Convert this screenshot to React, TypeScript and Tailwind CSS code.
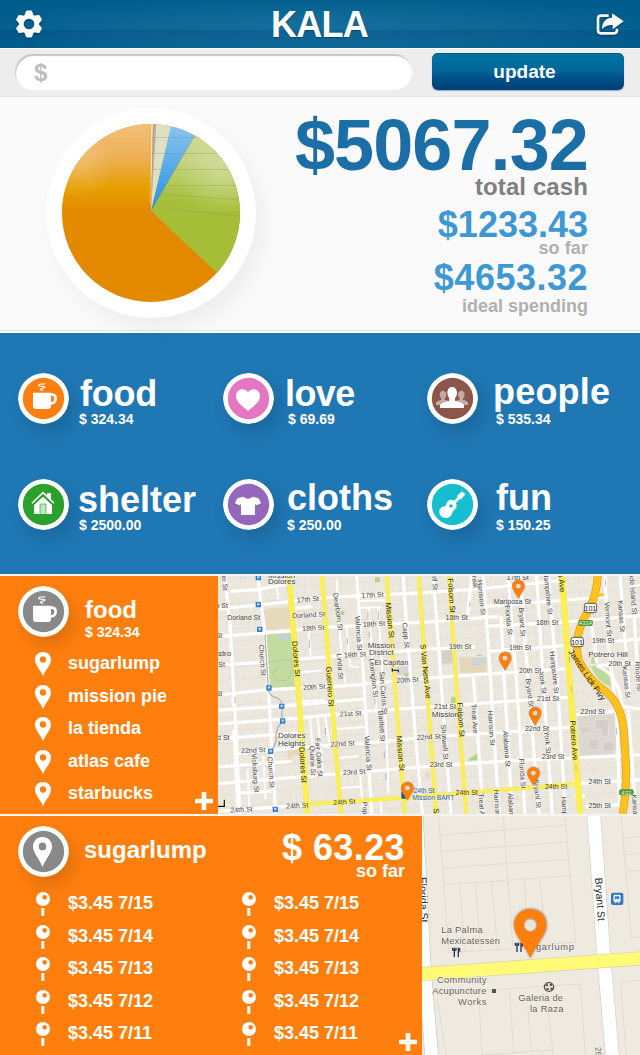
import type { ReactNode } from "react";

type P = { className?: string };

/* ---------- icons ---------- */

const GearIcon = () => (
  <svg viewBox="0 0 28 28" className="h-7 w-7 drop-shadow-[0_1px_1px_rgba(0,0,0,0.3)]">
    <circle cx="14" cy="14" r="7.6" strokeWidth="4.6" stroke="#fafafa" fill="none" />
    {[0, 60, 120, 180, 240, 300].map((a) => (
      <path key={a} d="M9.2 6L10.8 1.4Q11.1 0.5 12 0.5H16Q16.9 0.5 17.2 1.4L18.8 6L16 7.5H12Z" fill="#fafafa" transform={`rotate(${a} 14 14)`} />
    ))}
  </svg>
);

const ShareIcon = () => (
  <svg viewBox="0 0 84 69" className="h-[23px] w-7 drop-shadow-[0_1px_1px_rgba(0,0,0,0.3)]">
    <path d="M38 8H15Q6 8 6 17V52Q6 61 15 61H54Q63 61 63 52V47" fill="none" stroke="#f4f4f4" strokeWidth="8" />
    <path d="M48 1L83 25L50 49V36C38 35 28 38 18 48C18 29 28 15 48 14Z" fill="#fafafa" />
  </svg>
);

const CupIcon = () => (
  <>
    <path d="M45 59H99V99Q99 108 90 108H54Q45 108 45 99Z" fill="#fff" />
    <path d="M97 65H102Q114 66 113 78Q112 91 98 91" fill="none" stroke="#fff" strokeWidth="8" />
    <path d="M82 31C76 36 66 30 62 36C60 42 76 38 80 41C83 46 68 44 67 49Q68 52 76 51" fill="none" stroke="#fff" strokeWidth="3.5" />
  </>
);

const HeartIcon = () => (
  <path d="M75 114C64 103 39 89 39 69C39 46 66 43 75 58C84 43 111 46 111 69C111 89 86 103 75 114Z" fill="#fff" />
);

const PeopleIcon = () => (
  <g fill="#fff">
    <g opacity="0.5">
      <path d="M38 64C38 50 58 50 58 64Q58 73 53 76V80L66 85L50 96H27V90Q28 84 43 80V76Q38 72 38 64Z" />
      <path d="M93 64C93 50 113 50 113 64Q113 73 108 76V80Q123 84 123 90V96H100L84 85L98 80V76Q93 72 93 64Z" />
    </g>
    <path d="M61 59C61 36 90 36 90 59Q90 71 84 76V83Q111 89 111 98V105H39V98Q40 89 67 83V76Q61 71 61 59Z" />
  </g>
);

const HouseIcon = () => (
  <>
    <path d="M48 78L75 53L102 78V105H48Z" fill="#fff" />
    <path d="M42 73L75 41L108 73" fill="none" stroke="#fff" strokeWidth="4.5" />
    <path d="M87 42H99V63L87 52Z" fill="#fff" />
    <path d="M66 105V75H84V105" fill="#c5e6c5" stroke="#2ca02c" strokeWidth="2" />
  </>
);

const ShirtIcon = () => (
  <path d="M61 53Q75 65 89 53L105 57Q113 63 114 73L100 79L96 75V108H54V75L50 79L36 73Q37 63 45 57Z" fill="#fff" />
);

const GuitarIcon = () => (
  <>
    <path d="M58 74C63 58 84 58 88 76C92 90 78 92 76 101C72 121 47 121 39 107C32 91 44 81 54 83Z" fill="#fff" />
    <path d="M76 77L96 56" stroke="#fff" strokeWidth="9" />
    <path d="M91 51L105 38L114 46L101 61Z" fill="#fff" stroke="#fff" strokeWidth="2" strokeLinejoin="round" />
    <circle cx="72" cy="81" r="5.5" fill="#17becf" />
  </>
);

const PinShape = ({ fill, hole }: { fill: string; hole?: string }) => (
  <>
    <path d="M24 0C38 0 48 10 48 23C48 38 33 51 24 72C15 51 0 38 0 23C0 10 10 0 24 0ZM24 13A9.5 9.5 0 1 0 24 32A9.5 9.5 0 1 0 24 13Z" fill={fill} fillRule="evenodd" />
    {hole && <circle cx="24" cy="22.5" r="9.5" fill={hole} />}
  </>
);

const CirclePinIcon = () => (
  <g transform="translate(45 33) scale(1.19 1.25)">
    <PinShape fill="#fff" />
  </g>
);

const PinIcon = () => (
  <svg viewBox="0 0 48 72" className="h-6 w-4 shrink-0">
    <PinShape fill="#fff" />
  </svg>
);

const TackIcon = () => (
  <svg viewBox="0 0 42 72" className="h-6 w-3.5 shrink-0">
    <path d="M21 0A21 21 0 1 0 21 42A21 21 0 1 0 21 0ZM26 9A7 7 0 1 1 26 23A7 7 0 1 1 26 9Z" fill="#fff" fillRule="evenodd" />
    <rect x="16" y="48" width="9" height="24" fill="#fff" />
  </svg>
);

const PlusIcon = ({ className = "" }: P) => (
  <svg viewBox="0 0 18 18" className={`h-[18px] w-[18px] shrink-0 ${className}`}>
    <path d="M9 0V18M0 9H18" stroke="#fff" strokeWidth="4.6" />
  </svg>
);

const Disc = ({ color, children }: { color: string; children: ReactNode }) => (
  <svg viewBox="0 0 153 153" className="h-[51px] w-[51px] shrink-0 rounded-full shadow-[6px_9px_18px_rgba(0,0,0,0.13)]">
    <circle cx="76.5" cy="76.5" r="76.5" fill="#fff" />
    <circle cx="76.5" cy="76.5" r="62" fill={color} />
    {children}
  </svg>
);

/* ---------- summary pie ---------- */

const Pie = () => (
  <svg viewBox="0 0 178 178" className="h-[178px] w-[178px]">
    <defs>
      <clipPath id="pie">
        <circle cx="89" cy="89" r="89" />
      </clipPath>
      <linearGradient id="orangeTop" x1="0" y1="0" x2="0" y2="1">
        <stop offset="0" stopColor="#f2c078" />
        <stop offset="0.35" stopColor="#eeb25a" />
        <stop offset="0.6" stopColor="#e9a420" />
        <stop offset="0.72" stopColor="#e7a000" />
        <stop offset="1" stopColor="#e38900" />
      </linearGradient>
      <linearGradient id="greenTop" x1="0.3" y1="0" x2="0.15" y2="1">
        <stop offset="0" stopColor="#d3dd9c" />
        <stop offset="0.4" stopColor="#c5d381" />
        <stop offset="0.85" stopColor="#a9c03e" />
        <stop offset="1" stopColor="#a6bd38" />
      </linearGradient>
      <linearGradient id="blueTop" x1="0" y1="0" x2="0" y2="1">
        <stop offset="0" stopColor="#8cc5ef" />
        <stop offset="1" stopColor="#2291e2" />
      </linearGradient>
      <radialGradient id="gloss" cx="0.2" cy="0.45" r="0.4">
        <stop offset="0" stopColor="#fff" stopOpacity="0.18" />
        <stop offset="1" stopColor="#fff" stopOpacity="0" />
      </radialGradient>
      <radialGradient id="glossRight" cx="0.75" cy="0.6" r="0.45">
        <stop offset="0" stopColor="#fff" stopOpacity="0.2" />
        <stop offset="1" stopColor="#fff" stopOpacity="0" />
      </radialGradient>
    </defs>
    <g clipPath="url(#pie)">
      <rect width="178" height="178" fill="#e38900" />
      <rect width="89" height="88" fill="url(#orangeTop)" />
      <rect width="89" height="88" fill="url(#gloss)" />
      <path d="M89 87L134 10L180 10V178H185L154 148Z" fill="#a6bd38" />
      <path d="M89 87L140 0H180V87Z" fill="url(#greenTop)" />
      <path d="M89 87L140 0H180V87Z" fill="url(#glossRight)" />
      <path d="M89 87L109 0H139.5Z" fill="url(#blueTop)" />
      <path d="M89 87L93 0H109.5Z" fill="#dfdfc1" />
      <path d="M89 87L89 0H91Z" fill="#eee6bc" />
      <path d="M89 87L91 0H92.5Z" fill="#df8f78" />
      <path d="M89 87L92.6 0H94.5Z" fill="#9dbccb" />
      <path d="M88.4 0V80" stroke="#efb94f" strokeWidth="1" />
      <path d="M91 13.5H140M91 29.5H155M91 45.5H166M106 61.5H174M100 70L178 76M108 85L178 92" stroke="#7e9070" strokeOpacity="0.3" strokeWidth="1" fill="none" />
      <path d="M6 123L19 118" stroke="#b98a10" strokeOpacity="0.6" />
    </g>
  </svg>
);

/* ---------- neighbourhood map ---------- */

type Label = [x: number, y: number, text: string, angle?: number, size?: number];

const minorRoads = [
  "M9 108L130 96L330 74L640 58L800 47L1040 22",
  "M45 55L125 50L215 34",
  "M240 106L292 100M240 130L322 122",
  "M810 100L1130 75",
  "M9 190L150 180L330 163L640 147L850 130",
  "M815 160L1050 147L1275 128",
  "M9 276L150 268M250 258L450 243L640 228L780 222M820 235L1050 217M1140 210L1275 198",
  "M9 366L160 350L400 338L640 315L860 300L1060 287M1150 278L1275 268",
  "M9 412L250 395L450 378",
  "M9 453L250 435L450 415L640 402L860 386L1062 372",
  "M9 497L250 480",
  "M60 543L250 524L450 510L640 492L860 478L1072 462M1080 426L1210 413",
  "M9 632L250 612L420 598L640 580L860 565L1275 545",
  "M9 582L230 565M75 660L170 655M9 715L280 695M1090 632L1275 620",
  "M1110 702L1220 694M1080 668L1110 668",
  "M30 9L45 160L60 420L75 723",
  "M128 9L150 180L160 345L172 560L182 723",
  "M425 9L445 300L470 723",
  "M565 9L575 160L600 470L622 723",
  "M655 9L680 350L708 723",
  "M770 9L758 125M775 310L805 723",
  "M805 9L822 250L852 723",
  "M858 130L868 330L892 723",
  "M880 20L905 330L930 723",
  "M915 9L940 330L972 723",
  "M965 9L985 330L1012 723",
  "M1000 9L1027 330L1052 723",
  "M1170 9L1178 190L1205 420L1215 723",
  "M1215 9L1235 260L1243 370M1250 9L1270 330",
  "M1130 75L1180 70M1128 140L1145 270M1240 410L1262 723",
  "M1145 278Q1210 300 1222 400L1275 408",
];

const lanes = [
  "M185 40L190 78M280 170L287 250M365 20L370 100L380 260M395 165L405 280L430 282",
  "M460 100L485 420M490 100L515 500L520 660M430 85L510 82M430 105L500 102",
  "M285 435L300 610M308 432L325 610M330 430L345 520",
  "M245 300L320 292M260 385L330 380M365 468L448 462M370 555L430 550M378 645L440 640",
  "M98 590L104 720M122 545L130 650M145 548L152 680M50 375L55 400M55 470L68 723",
  "M385 300L395 340M435 600L445 720M495 680L500 723",
  "M1000 590L1010 640M1140 205L1145 250M1250 40L1275 36",
];

const yellowRoads: [string, number][] = [
  ["M222 9L250 350L277 723", 15],
  ["M321 9L348 350L378 723", 12],
  ["M515 9L541 350L570 723", 10],
  ["M611 9L636 350L664 723", 10],
  ["M702 9L725 350L754 723", 10],
  ["M1041 9L1066 350L1096 723", 17],
  ["M280 694L560 675L1090 632", 10],
];

const mapLabels: Label[] = [
  [200, 34, "Dolores", 0, 24],
  [200, 14, "Mission", 0, 24],
  [279, 86, "17th St", -4],
  [86, 141, "Dorland St"],
  [281, 133, "Dorland St", -3],
  [295, 172, "18th St", -3],
  [473, 73, "17th St", -3],
  [477, 160, "18th St", -3],
  [420, 252, "19th St", -3],
  [298, 349, "20th St", -3],
  [578, 328, "20th St", -3],
  [407, 429, "21st St", -3],
  [383, 519, "22nd St", -3],
  [115, 539, "22nd St", -3],
  [418, 604, "23rd St", -3],
  [388, 694, "24th St", -3],
  [247, 705, "24th St", -3],
  [80, 717, "24th St", -3],
  [22, 248, "astro", 0, 24],
  [20, 105, "h St"], [20, 283, "St"], [25, 502, "d St"], [12, 194, "St"], [12, 368, "St"],
  [499, 224, "Mission", 0, 24],
  [499, 247, "District", 0, 24],
  [529, 275, "El Capitan", 0, 22],
  [230, 496, "Dolores", 0, 24],
  [230, 519, "Heights", 0, 24],
  [642, 499, "22nd St", -3],
  [627, 660, "24th St", 0, 20],
  [655, 682, "Mission BART", 0, 20],
  [22, 30, "er St", 86],
  [135, 262, "Church St", 86],
  [161, 598, "Church St", 86],
  [114, 600, "Vicksburg St", 86],
  [236, 258, "Dolores St", 85, 23],
  [256, 576, "Dolores St", 86, 23],
  [337, 341, "Guerrero St", 86, 23],
  [362, 117, "Dearborn St", 82],
  [368, 280, "Linda St", 86],
  [424, 181, "Valencia St", 86],
  [452, 541, "Valencia St", 86],
  [469, 315, "Lexington St", 84],
  [498, 360, "San Carlos St", 86],
  [493, 460, "Bartlett St", 86],
  [517, 143, "Mission St", 84, 23],
  [549, 542, "Mission St", 85, 23],
  [566, 188, "Capp St", 84],
  [624, 296, "S Van Ness Ave", 84, 23],
  [305, 554, "Fair Oaks St", 86],
  [286, 563, "Quane St", 88],
  [443, 708, "Popl", 86],
  [892, 92, "Mariposa St"],
  [908, 22, "17th St"],
  [725, 140, "18th St"],
  [996, 155, "18th St"],
  [735, 228, "19th St"],
  [915, 230, "19th St"],
  [1164, 211, "19th St"],
  [945, 299, "20th St"],
  [1214, 278, "20th St"],
  [999, 384, "21st St"],
  [690, 407, "21st St"],
  [691, 432, "Mission", 0, 24],
  [1133, 424, "22nd St"],
  [966, 474, "22nd St"],
  [1014, 558, "23rd St"],
  [678, 583, "23rd St"],
  [1023, 647, "24th St"],
  [755, 667, "24th St"],
  [1154, 634, "24th St"],
  [1154, 704, "25th St"],
  [1179, 252, "Potrero Hill", 0, 24],
  [652, 28, "ell St", 86],
  [702, 68, "Folsom St", 86, 23],
  [730, 441, "Folsom St", 86, 23],
  [772, 22, "Treat", 80],
  [792, 74, "Harrison St", 84],
  [772, 438, "Treat Ave", 86],
  [682, 508, "Shotwell St", 86],
  [822, 466, "Harrison St", 86],
  [868, 528, "Alabama St", 86],
  [874, 142, "Florida St", 84],
  [914, 147, "Bryant St", 86],
  [992, 62, "Hampshire St", 84],
  [937, 360, "Bryant St", 84],
  [976, 330, "York St", 82],
  [1011, 299, "Hampshire St", 84],
  [990, 509, "York St", 85],
  [1069, 503, "Potrero Ave", 86, 23],
  [1032, 30, "o Ave", 84, 23],
  [915, 602, "Florida St", 86],
  [960, 663, "Bryant St", 84],
  [1172, 139, "Vermont St", 86],
  [1212, 130, "Kansas St", 86],
  [1247, 63, "ode Island St", 86],
  [1227, 328, "Kansas St", 84],
  [1263, 310, "Rhode Isl", 86],
  [1253, 700, "Kansas", 86],
  [839, 690, "Harrison", 86],
  [881, 696, "Alabam", 86],
  [793, 700, "Treat Av", 86],
  [1041, 700, "Hamp", 86],
  [656, 714, "S", 86, 23],
  [1109, 311, "James Lick Fwy", 56, 25],
];

const transit: [number, number][] = [
  [130, 14], [130, 95], [134, 169], [162, 345], [200, 400], [203, 444], [167, 535], [181, 709],
];

const mapPins: [number, number][] = [
  [910, 77], [870, 293], [960, 458], [955, 638], [577, 683],
];

const NeighbourhoodMap = () => (
  <svg viewBox="9 9 1266 714" preserveAspectRatio="none" className="h-[238px] w-[422px] shrink-0 font-normal">
    <defs>
      <pattern id="lots" width="44" height="38" patternUnits="userSpaceOnUse" patternTransform="rotate(-4)">
        <path d="M0 0V38M22 0V19M0 19H44M33 19V38" stroke="#dfdace" strokeWidth="1.6" fill="none" />
      </pattern>
      <filter id="pinShadow" x="-50%" y="-30%" width="200%" height="170%">
        <feDropShadow dx="1" dy="-1" stdDeviation="2.5" floodColor="#333" floodOpacity="0.8" />
      </filter>
    </defs>
    <rect x="0" y="0" width="1290" height="740" fill="#ece8de" />
    <rect x="0" y="0" width="1290" height="740" fill="url(#lots)" />

    <path d="M139 108L226 102L230 166L143 172Z" fill="#e5dabb" />
    <path d="M146 184L232 180L239 342L162 348Z" fill="#c3dba0" />
    <path d="M185 184L225 182L227 200L190 200Z" fill="#bfd3d3" />
    <path d="M160 268L225 258Q245 290 215 322Q180 330 172 300Q175 290 190 285" fill="none" stroke="#adc98e" strokeWidth="2.5" />
    <path d="M680 233L718 230L722 270L682 273Z" fill="#d3cfcb" />
    <path d="M733 252L815 252L815 298L735 300Z" fill="#e4d7ba" />
    <path d="M770 256L812 254L813 275L772 277Z" fill="#c6d7d6" />
    <path d="M708 372L726 370V390L708 392ZM376 115L388 113V125L376 127ZM480 13H494V28H480ZM755 563L788 540V562Z" fill="#b2d58e" />
    <path d="M218 530L258 526V545L230 548V572H218Z" fill="#e5dabb" />
    <path d="M632 600L645 598V614H632Z" fill="#e5dabb" />
    <path d="M1128 282Q1150 270 1182 290L1188 342Q1150 330 1128 282ZM1130 252H1142V272H1128Z" fill="#bcd99c" />
    <path d="M1105 110H1120L1110 140L1100 145ZM1240 120L1270 112V126Z" fill="#c5dda6" />
    <path d="M545 280H580V306H545Z" fill="#d9d4d6" />
    <path d="M568 300H580V310H568Z" fill="#b2d58e" />
    <path d="M1086 430L1198 424L1205 520L1195 548L1095 552Z" fill="#ddd8cf" />
    <path d="M1095 460H1125V480H1095ZM1140 440L1180 438V490H1160V470H1140ZM1120 500H1150V530H1120ZM1165 505H1195V535H1165Z" fill="#d3cec8" stroke="#e9e5dd" strokeWidth="2" />

    <g fill="none" stroke="#fff" strokeLinejoin="round">
      {lanes.map((d) => <path key={d} d={d} strokeWidth="6" />)}
      {minorRoads.map((d) => <path key={d} d={d} strokeWidth="9.5" />)}
    </g>
    <g fill="none">
      {yellowRoads.map(([d, w]) => <path key={d} d={d} strokeWidth={w + 2} stroke="#f0e27c" />)}
      {yellowRoads.map(([d, w]) => <path key={d} d={d} strokeWidth={w} stroke="#fcf050" />)}
      <path d="M150 185L160 350Q165 372 188 375Q205 385 200 420L203 445Q178 470 184 500Q180 520 167 535" stroke="#b5b3b0" strokeWidth="4" />
      <path d="M1148 9Q1146 60 1122 110Q1070 190 1092 265Q1120 320 1175 358Q1226 400 1228 500Q1240 640 1222 723" stroke="#dd9c20" strokeWidth="24" />
      <path d="M1148 9Q1146 60 1122 110Q1070 190 1092 265Q1120 320 1175 358Q1226 400 1228 500Q1240 640 1222 723" stroke="#ffc11c" strokeWidth="20" />
      <path d="M1145 70L1168 64" stroke="#ffc11c" strokeWidth="8" />
      <path d="M459 115V140M491 115V140M283 200V225M397 195V215M463 175V195M331 465V485M480 375V395M508 535V555M60 372V392M513 600V620M764 85V102M1171 20V38M1063 250V268M1069 340V356M1205 465V485M1083 575V592M785 247H800" stroke="#a5acb8" strokeWidth="2.5" />
    </g>

    {transit.map(([x, y]) => (
      <g key={`${x}-${y}`}>
        <rect x={x - 8} y={y - 8} width="16" height="16" rx="2" fill="#2f7fd0" />
        <path d={`M${x - 3} ${y - 4}H${x + 3}V${y + 1}H${x - 3}ZM${x - 3} ${y + 4}H${x + 3}`} fill="#cfe2f7" stroke="#cfe2f7" strokeWidth="1" />
      </g>
    ))}
    <path d="M532 286V296M532 292H550V298" stroke="#2b3563" strokeWidth="4" fill="none" />

    {[[1126, 105], [1086, 207]].map(([x, y]) => (
      <g key={y}>
        <rect x={x - 18} y={y - 14} width="37" height="28" rx="7" fill="#fff" stroke="#333" strokeWidth="2.5" />
        <text x={x} y={y + 8} textAnchor="middle" fontSize="21" fill="#111" className="font-['Liberation_Sans']">101</text>
      </g>
    ))}
    {([[1112, 150, "433A"], [1234, 658, "432"]] as [number, number, string][]).map(([x, y, t]) => (
      <g key={t}>
        <rect x={x - 22} y={y - 9} width="44" height="18" rx="6" fill="#4b9b3c" />
        <text x={x} y={y + 7} textAnchor="middle" fontSize="18" fill="#e2f3dc" className="font-['Liberation_Sans']">{t}</text>
      </g>
    ))}

    <g className="font-['Liberation_Sans']" textAnchor="middle" stroke="#f7f5ef" strokeWidth="3" paintOrder="stroke">
      {mapLabels.map(([x, y, text, angle = 0, size = 21]) => (
        <text
          key={`${x}-${y}`}
          x={x}
          y={y}
          fontSize={size}
          transform={`rotate(${angle} ${x} ${y})`}
          fill={text.includes("BART") || size === 20 ? "#2c5c8c" : size > 22 && angle ? "#2a2a12" : "#444"}
          strokeOpacity={(size > 22 && angle) || text.startsWith("24th") ? 0 : 0.9}
        >
          {text}
        </text>
      ))}
    </g>

    <rect x="559" y="655" width="16" height="22" rx="2" fill="#24548c" />
    <path d="M9 700H28V680" fill="none" stroke="#111" strokeWidth="3.5" />
    {mapPins.map(([x, y]) => (
      <g key={`${x}-${y}`} transform={`translate(${x - 18.5} ${y - 55}) scale(0.77)`} filter="url(#pinShadow)">
        <PinShape fill="#ff7f0e" hole="#e2dbd2" />
      </g>
    ))}
  </svg>
);

/* ---------- street map ---------- */

const StreetMap = () => (
  <svg viewBox="12 12 654 717" preserveAspectRatio="none" className="h-[239px] w-[218px] shrink-0 font-normal">
    <defs>
      <filter id="bigShadow" x="-40%" y="-30%" width="180%" height="160%">
        <feDropShadow dx="0.5" dy="-0.5" stdDeviation="1.3" floodColor="#333" floodOpacity="0.75" />
      </filter>
    </defs>
    <rect width="680" height="740" fill="#eeeae0" />
    <g fill="none" stroke="#e0dcd3" strokeWidth="3">
      <path d="M62 15L78 218L92 422L280 410M65 70L258 54L443 40M70 119L262 103L450 90M75 169L266 154L456 142M78 219L460 190M256 15L269 204M441 15L473 390L350 400" />
      <path d="M126 218L140 418M173 214L187 412M221 210L238 410M270 206L284 400M319 202L325 300M366 198L377 330" />
      <path d="M610 15L640 378L666 376M613 78L666 73M620 128L666 124M625 178L666 174" />
      <path d="M58 560L85 729M85 545L272 530L487 516L502 729M182 540L192 729M274 530L288 725M330 600L341 718M390 590L405 729M192 729L405 714M608 520L625 729M605 510L666 505" />
    </g>
    <g fill="none">
      <path d="M-5 12L20 480L42 740" stroke="#d0c7c0" strokeWidth="42" />
      <path d="M-5 12L20 480L42 740" stroke="#fff" strokeWidth="38" />
      <path d="M526 -10L558 440L584 740" stroke="#d8cfc7" strokeWidth="43" />
      <path d="M526 -10L558 440L584 740" stroke="#fff" strokeWidth="39" />
      <path d="M0 487L670 439" stroke="#ddcfa8" strokeWidth="42" />
      <path d="M0 487L670 439" stroke="#fffb77" strokeWidth="38" />
    </g>
    <g className="font-['Liberation_Sans']" fill="#6a6258" fontSize="28" stroke="#f4f1e9" strokeWidth="3" paintOrder="stroke">
      <text x="70" y="364" textLength="124">La Palma</text>
      <text x="70" y="396" textLength="176">Mexicatessen</text>
      <text x="336" y="415" textLength="132">ugarlump</text>
      <text x="206" y="514" textAnchor="end" textLength="149">Community</text>
      <text x="205" y="547" textAnchor="end" textLength="162">Acupuncture</text>
      <text x="205" y="580" textAnchor="end" textLength="85">Works</text>
      <text x="435" y="568" textAnchor="end" textLength="134">Galeria de</text>
      <text x="436" y="600" textAnchor="end" textLength="100">la Raza</text>
      <g fill="#222" strokeOpacity="0" fontSize="31">
        <text transform="translate(531 198) rotate(86)" textLength="130">Bryant St</text>
        <text transform="translate(4 196) rotate(88)" textLength="136">Florida St</text>
      </g>
      <text transform="translate(531 705) rotate(86)" fill="#777" fontSize="26">26th</text>
    </g>
    <rect x="222" y="531" width="12" height="12" fill="#5d5148" />
    {[[104, 407], [292, 392]].map(([x, y]) => (
      <path key={x} d={`M${x} ${y}V${y + 7}Q${x + 5} ${y + 10} ${x + 10} ${y + 7}V${y}M${x + 5} ${y}V${y + 28}M${x + 17} ${y + 28}V${y + 2}Q${x + 23} ${y + 1} ${x + 21} ${y + 12}`} fill="none" stroke="#2a3160" strokeWidth="4" />
    ))}
    <ellipse cx="393" cy="525" rx="14" ry="13" fill="#eeeae0" stroke="#5d5148" strokeWidth="4" />
    <path d="M383 517H390V523H383ZM395 516H402V522H395ZM385 528H392V534H385ZM396 527H408L400 538Z" fill="#5d5148" />
    <rect x="579" y="242" width="37" height="37" rx="6" fill="#2f78ca" />
    <path d="M588 250H606V268H588ZM591 272H595M600 272H604" fill="#fff" stroke="#fff" strokeWidth="3" />
    <path d="M591 254H603V260H591ZM591 265H593M601 265H603" fill="#2f78ca" stroke="#2f78ca" strokeWidth="2" />
    <g transform="translate(288 292) scale(2.02 2.03)" filter="url(#bigShadow)">
      <PinShape fill="#ff7f0e" />
    </g>
    <circle cx="337" cy="340" r="18" fill="#ebe6dc" stroke="#b9aa9c" strokeWidth="2.5" />
  </svg>
);

/* ---------- content ---------- */

type Category = { name: string; amount: string; color: string; icon: ReactNode; nameBox: string; amountBox: string };

const categories: Category[] = [
  { name: "food", amount: "$ 324.34", color: "#ff7f0e", icon: <CupIcon />, nameBox: "mt-[2px] mb-[-1px] ml-[11px] tracking-[-0.2px]", amountBox: "ml-[10px]" },
  { name: "love", amount: "$ 69.69", color: "#e377c2", icon: <HeartIcon />, nameBox: "mt-[2px] mb-[-1px] ml-[11px] tracking-[-0.6px]", amountBox: "ml-[14px]" },
  { name: "people", amount: "$ 535.34", color: "#8c564b", icon: <PeopleIcon />, nameBox: "mb-[1px] ml-[15px] tracking-[0.2px]", amountBox: "ml-[18px]" },
  { name: "shelter", amount: "$ 2500.00", color: "#2ca02c", icon: <HouseIcon />, nameBox: "mt-[2px] mb-[-1px] ml-[9px]", amountBox: "ml-[10px]" },
  { name: "cloths", amount: "$ 250.00", color: "#9467bd", icon: <ShirtIcon />, nameBox: "mb-[1px] ml-[13px]", amountBox: "ml-[13px]" },
  { name: "fun", amount: "$ 150.25", color: "#17becf", icon: <GuitarIcon />, nameBox: "mb-[1px] ml-[18px]", amountBox: "ml-[18px]" },
];

const places = ["sugarlump", "mission pie", "la tienda", "atlas cafe", "starbucks"];
const entries = ["$3.45 7/15", "$3.45 7/14", "$3.45 7/13", "$3.45 7/12", "$3.45 7/11"];

const EntryList = () => (
  <ul className="w-[206px] shrink-0">
    {entries.map((e) => (
      <li key={e} className="flex h-[32.5px] items-start">
        <TackIcon />
        <span className="ml-[18px] text-[18px] leading-[22px]">{e}</span>
      </li>
    ))}
  </ul>
);

export default function App() {
  return (
    <div className="h-[1055px] w-[640px] overflow-hidden bg-[#fafafa] font-['Liberation_Sans',Arial,sans-serif] font-bold text-white">
      <header className="flex h-12 items-start justify-between bg-[linear-gradient(180deg,transparent_30px,rgba(0,50,110,0.22)_30px,transparent_46px),radial-gradient(ellipse_at_50%_60%,#146f9e_0%,#0d6896_40%,#005c8c_80%)] pt-[6px] pr-4 pl-[15px]">
        <div className="pt-1"><GearIcon /></div>
        <h1 className="text-[36px] leading-[37px] tracking-[-0.7px] [text-shadow:0_1px_1px_rgba(0,0,0,0.3)]">KALA</h1>
        <div className="pt-[7px]"><ShareIcon /></div>
      </header>

      <div className="flex h-[49px] items-start justify-between border-t border-b border-t-white border-b-[#e2e2e2] bg-[#ededed] pt-1 pr-4 pl-[15px]">
        <div className="mt-[1px] flex h-9 w-[397px] items-center rounded-full bg-white pt-[2px] pl-[19px] text-[24px] leading-none text-[#bdbdbd] shadow-[inset_1px_2px_1px_#c6c6c6]">
          $
        </div>
        <button className="h-[37px] w-48 rounded-[6px] bg-[linear-gradient(180deg,#0073a3_0%,#006899_45%,#00508a_68%,#003f73_100%)] pr-[7px] text-[19px] leading-[37px] shadow-[inset_0_1px_0_#00557f,0_1px_1px_#8fb0c6]">
          update
        </button>
      </div>

      <section className="flex h-[236px] justify-between border-b-2 border-white bg-[#fafafa] pr-[52px] pl-[46px] shadow-[inset_0_-1px_0_#e4e4e4]">
        <div className="mt-[11px] flex h-[210px] w-[210px] items-center justify-center rounded-full bg-white shadow-[8px_12px_20px_rgba(0,0,0,0.05)]">
          <Pie />
        </div>
        <div className="flex flex-col items-end pt-[15px]">
          <p className="text-[72px] leading-[66px] tracking-[-0.9px] text-[#1c6ea6]">$5067.32</p>
          <p className="text-[24px] leading-[18px] tracking-[0.1px] text-[#7f7f7f]">total cash</p>
          <p className="mt-3 text-[36px] leading-[34px] text-[#3d98d3]">$1233.43</p>
          <p className="text-[18px] leading-[12px] tracking-[0.1px] text-[#b0b0b0]">so far</p>
          <p className="mt-[7px] text-[36px] leading-[34px] tracking-[0.5px] text-[#3d98d3]">$4653.32</p>
          <p className="mt-[2px] text-[18px] leading-[18px] text-[#b0b0b0]">ideal spending</p>
        </div>
      </section>

      <section className="grid h-[241px] grid-cols-[205px_204px_213px] grid-rows-[106px_106px] bg-[#1f77b4] pt-10 pl-[18px]">
        {categories.map((c) => (
          <div key={c.name} className="flex items-start">
            <Disc color={c.color}>{c.icon}</Disc>
            <div>
              <h2 className={`text-[36px] leading-[37px] ${c.nameBox}`}>{c.name}</h2>
              <p className={`text-[14px] leading-[16px] ${c.amountBox}`}>{c.amount}</p>
            </div>
          </div>
        ))}
      </section>

      <section className="flex h-[242px] border-t-2 border-b-2 border-[#f4f4f4]">
        <div className="flex w-[218px] justify-between bg-[#ff7f0e]">
          <div className="pt-[10px] pl-[18px]">
            <div className="flex h-[66px] items-start">
              <Disc color="#898989"><CupIcon /></Disc>
              <div className="ml-4 pt-[11px]">
                <h2 className="text-[24px] leading-[25px]">food</h2>
                <p className="mt-[2px] text-[14px] leading-[17px]">$ 324.34</p>
              </div>
            </div>
            <ul className="pl-[17px]">
              {places.map((p) => (
                <li key={p} className="flex h-[32.5px] items-start">
                  <PinIcon />
                  <span className="ml-[17px] text-[18px] leading-[22px] whitespace-nowrap">{p}</span>
                </li>
              ))}
            </ul>
          </div>
          <PlusIcon className="mr-[5px] mb-1 self-end" />
        </div>
        <NeighbourhoodMap />
      </section>

      <section className="flex h-[239px]">
        <div className="flex w-[422px] flex-col bg-[#ff7f0e] pt-[10px] pl-[18px]">
          <div className="flex h-[66px] items-start pr-[17px]">
            <Disc color="#898989"><CirclePinIcon /></Disc>
            <h2 className="ml-[15px] pt-[11px] text-[24px] leading-[25px]">sugarlump</h2>
            <div className="ml-auto pt-[5px] text-right">
              <p className="text-[36px] leading-[34px] tracking-[0.4px]">$ 63.23</p>
              <p className="text-[18px] leading-[12px]">so far</p>
            </div>
          </div>
          <div className="flex flex-1 pl-[18px]">
            <EntryList />
            <EntryList />
          </div>
          <PlusIcon className="mt-[-22px] mr-[5px] mb-1 self-end" />
        </div>
        <StreetMap />
      </section>
    </div>
  );
}
